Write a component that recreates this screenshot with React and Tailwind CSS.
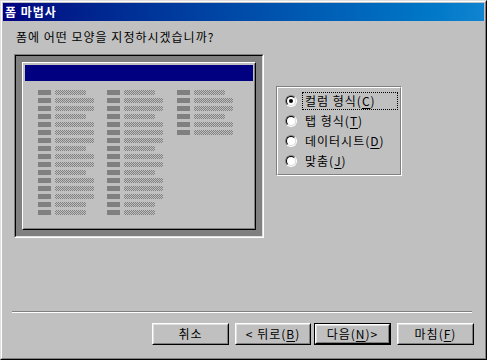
import React from 'react';

// short / long pattern of the placeholder fields in the preview
const rows = ['s', 'l', 'l', 's', 'l', 'l', 'l', 's', 'l', 'l', 's', 'l', 'l', 'l', 's', 's'];

const Field = ({ long }) => (
  <div className="flex items-center gap-[4px] h-[5px]">
    <div className="w-[13px] h-[5px] bg-[#808080]" />
    <div
      className={
        long
          ? 'w-[39px] h-[5px] bg-[repeating-conic-gradient(#808080_0%_25%,#c0c0c0_0%_50%)] bg-[length:2px_2px]'
          : 'w-[31px] h-[5px] bg-[repeating-conic-gradient(#808080_0%_25%,#c0c0c0_0%_50%)] bg-[length:2px_2px]'
      }
    />
  </div>
);

const Column = ({ items, width }) => (
  <div className={width} >
    <div className="flex flex-col gap-[3px]">
      {items.map((r, i) => (
        <Field key={i} long={r === 'l'} />
      ))}
    </div>
  </div>
);

const Radio = ({ checked }) => (
  <div className="w-[12px] h-[12px] shrink-0 rounded-full border border-t-[#808080] border-l-[#808080] border-r-white border-b-white">
    <div className="w-full h-full rounded-full border border-t-black border-l-black border-r-[#dfdfdf] border-b-[#dfdfdf] bg-white flex items-center justify-center">
      {checked && <div className="w-[4px] h-[4px] rounded-full bg-black" />}
    </div>
  </div>
);

const Option = ({ label, hot, checked, focused }) => (
  <div className="flex items-center h-[20px] pl-[7px]">
    <Radio checked={checked} />
    <div
      className={
        focused
          ? 'ml-[5px] w-[96px] h-[18px] border border-dotted border-black pl-[2px] flex items-center'
          : 'ml-[5px] w-[96px] h-[18px] border border-transparent pl-[2px] flex items-center'
      }
    >
      {label}(<span className="underline underline-offset-2">{hot}</span>)
    </div>
  </div>
);

const Btn = ({ children, w, def }) =>
  def ? (
    <div className={`${w} h-[22px] border border-black`}>
      <div className="w-full h-full border border-t-white border-l-white border-r-black border-b-black">
        <div className="w-full h-full border border-t-[#dfdfdf] border-l-[#dfdfdf] border-r-[#808080] border-b-[#808080] flex items-center justify-center">
          {children}
        </div>
      </div>
    </div>
  ) : (
    <div className={`${w} h-[22px] border border-t-white border-l-white border-r-black border-b-black`}>
      <div className="w-full h-full border border-t-[#dfdfdf] border-l-[#dfdfdf] border-r-[#808080] border-b-[#808080] flex items-center justify-center">
        {children}
      </div>
    </div>
  );

export default function App() {
  return (
    <div className="w-[487px] h-[360px] bg-[#c0c0c0] text-black text-[12px] leading-[12px] tracking-[1px] font-['Noto_Sans_CJK_KR',sans-serif] border border-t-[#dfdfdf] border-l-[#dfdfdf] border-r-black border-b-black">
      <div className="w-full h-full border border-t-white border-l-white border-r-[#808080] border-b-[#808080] flex flex-col">
        {/* title bar */}
        <div className="mx-[1px] mt-[1px] h-[18px] bg-gradient-to-r from-[#000080] to-[#1084d0] flex items-center pl-[2px] text-white font-bold">
          폼 마법사
        </div>

        <div className="ml-[14px] mt-[10px] h-[12px]">폼에 어떤 모양을 지정하시겠습니까?</div>

        <div className="flex mt-[11px] ml-[12px]">
          {/* preview */}
          <div className="w-[250px] h-[184px] border border-t-[#808080] border-l-[#808080] border-r-white border-b-white">
            <div className="w-full h-full border border-t-black border-l-black border-r-[#dfdfdf] border-b-[#dfdfdf] bg-[#808080] p-[6px]">
              <div className="w-full h-full border border-t-white border-l-white border-r-black border-b-black">
                <div className="w-full h-full border border-t-[#c0c0c0] border-l-[#c0c0c0] border-r-[#808080] border-b-[#808080] bg-[#c0c0c0] p-[1px]">
                  <div className="h-[16px] bg-[#000080]" />
                  <div className="flex mt-[9px] pl-[13px]">
                    <Column items={rows} width="w-[69px]" />
                    <Column items={rows} width="w-[70px]" />
                    <Column items={rows.slice(0, 6)} width="w-[60px]" />
                  </div>
                </div>
              </div>
            </div>
          </div>

          {/* layout options */}
          <div className="ml-[12px] mt-[32px] w-[126px] h-[90px] border border-t-[#808080] border-l-[#808080] border-r-white border-b-white">
            <div className="w-full h-full border border-t-white border-l-white border-r-[#808080] border-b-[#808080] pt-[3px]">
              <Option label="컬럼 형식" hot="C" checked focused />
              <Option label="탭 형식" hot="T" />
              <Option label="데이터시트" hot="D" />
              <Option label="맞춤" hot="J" />
            </div>
          </div>
        </div>

        <div className="mt-[73px] ml-[10px] w-[460px] h-[2px] border-t border-t-[#808080] border-b border-b-white" />

        <div className="flex mt-[10px] ml-[150px]">
          <Btn w="w-[77px]">취소</Btn>
          <div className="ml-[6px]">
            <Btn w="w-[76px]">
              &lt; 뒤로(<span className="underline underline-offset-2">B</span>)
            </Btn>
          </div>
          <div className="ml-[3px]">
            <Btn w="w-[77px]" def>
              다음(<span className="underline underline-offset-2">N</span>)&gt;
            </Btn>
          </div>
          <div className="ml-[6px]">
            <Btn w="w-[77px]">
              마침(<span className="underline underline-offset-2">F</span>)
            </Btn>
          </div>
        </div>
      </div>
    </div>
  );
}
